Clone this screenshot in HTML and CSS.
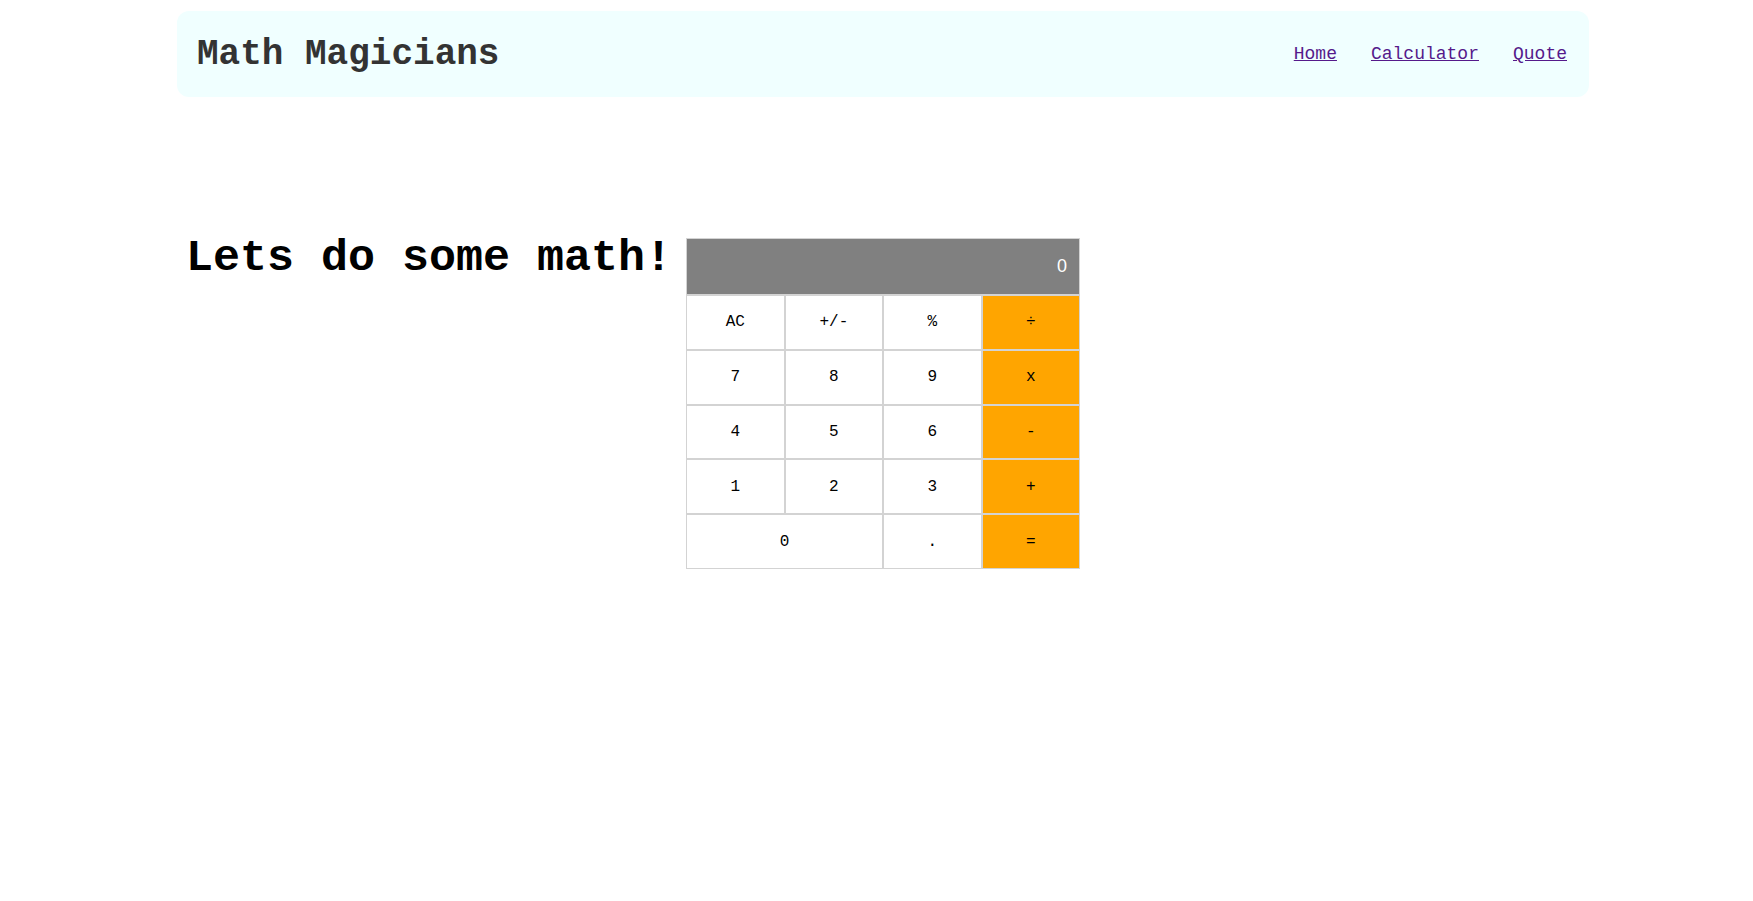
FILE: index.html
```html
<!DOCTYPE html>
<html lang="en">
<head>
<meta charset="utf-8">
<title>Math Magicians</title>
<link rel="stylesheet" href="styles.css">
</head>
<body>
<div class="app">
  <header class="navbar">
    <h1 class="brand">Math Magicians</h1>
    <nav class="nav-links">
      <a href="#" class="nav-link">Home</a>
      <a href="#" class="nav-link">Calculator</a>
      <a href="#" class="nav-link">Quote</a>
    </nav>
  </header>
  <main class="calc-page">
    <h2 class="calc-title">Lets do some math!</h2>
    <div class="calculator">
      <div class="display">0</div>
      <button class="key">AC</button>
      <button class="key">+/-</button>
      <button class="key">%</button>
      <button class="key op">÷</button>
      <button class="key">7</button>
      <button class="key">8</button>
      <button class="key">9</button>
      <button class="key op">x</button>
      <button class="key">4</button>
      <button class="key">5</button>
      <button class="key">6</button>
      <button class="key op">-</button>
      <button class="key">1</button>
      <button class="key">2</button>
      <button class="key">3</button>
      <button class="key op">+</button>
      <button class="key wide">0</button>
      <button class="key">.</button>
      <button class="key op">=</button>
    </div>
  </main>
</div>
</body>
</html>
```

FILE: styles.css
```css
* { box-sizing: border-box; }

body {
  margin: 0;
  background: #fff;
  font-family: "Liberation Mono", "Courier New", monospace;
}

.app {
  padding: 11px 164px 0 177px;
}

.navbar {
  height: 86px;
  background: #f0ffff;
  border-radius: 12px;
  padding: 0 22px 0 20px;
  display: flex;
  align-items: center;
  justify-content: space-between;
}

.brand {
  margin: 0;
  font-size: 36px;
  font-weight: bold;
  color: #333;
}

.nav-links {
  display: flex;
  gap: 34px;
}

.nav-link {
  font-size: 18px;
  color: #551a8b;
  text-decoration: underline;
}

.calc-page {
  display: flex;
  align-items: flex-start;
  margin-top: 134px;
  padding-left: 9px;
}

.calc-title {
  margin: 2px 14px 0 0;
  font-size: 45px;
  font-weight: bold;
  color: #000;
}

.calculator {
  margin-top: 7px;
  width: 394px;
  display: grid;
  grid-template-columns: repeat(4, 1fr);
}

.display {
  grid-column: 1 / -1;
  height: 57px;
  background: #808080;
  border: 1px solid #d3d3d3;
  color: #fff;
  font-family: "Liberation Sans", Arial, sans-serif;
  font-size: 18px;
  text-align: right;
  padding: 0 12px;
  display: flex;
  align-items: center;
  justify-content: flex-end;
}

.key {
  height: 54.8px;
  background: #fff;
  border: 1px solid #d3d3d3;
  font-family: "Liberation Mono", "Courier New", monospace;
  font-size: 16px;
  color: #000;
  padding: 0;
}

.key.op {
  background: #ffa500;
}

.key.wide {
  grid-column: span 2;
}
```
